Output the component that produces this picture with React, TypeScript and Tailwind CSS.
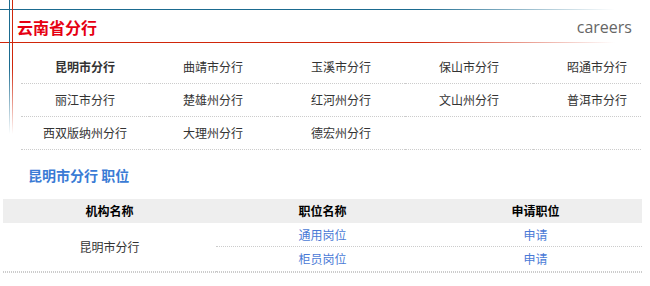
const branches = [
  "昆明市分行",
  "曲靖市分行",
  "玉溪市分行",
  "保山市分行",
  "昭通市分行",
  "丽江市分行",
  "楚雄州分行",
  "红河州分行",
  "文山州分行",
  "普洱市分行",
  "西双版纳州分行",
  "大理州分行",
  "德宏州分行",
  "",
  "",
];

const jobs = ["通用岗位", "柜员岗位"];

export default function App() {
  return (
    <div className="relative h-[286px] w-[650px] overflow-hidden bg-white font-['Noto_Sans_CJK_SC',sans-serif] text-[12px] text-[#333]">
      {/* decorative frame lines */}
      <div aria-hidden="true" className="pointer-events-none absolute left-0 top-[9px] h-px w-[615px] bg-linear-to-r from-[#1b6b90] via-[#1b6b90] via-68% to-white/0" />
      <div aria-hidden="true" className="pointer-events-none absolute left-0 top-[42px] h-px w-[615px] bg-linear-to-r from-[#d0260a] via-[#d0260a] via-68% to-white/0" />
      <div aria-hidden="true" className="pointer-events-none absolute left-[9px] top-0 h-[134px] w-px bg-linear-to-b from-[#1b6b90] via-[#1b6b90] via-50% to-white/0" />
      <div aria-hidden="true" className="pointer-events-none absolute left-[12px] top-0 h-[134px] w-px bg-linear-to-b from-[#d0260a] via-[#d0260a] via-50% to-white/0" />

      <div className="flex h-[43px] items-center justify-between pl-[17px] pr-[18px] pt-[10px]">
        <h2 className="text-[16px] font-bold leading-none text-[#e60012]">云南省分行</h2>
        <span className="font-['Open_Sans',sans-serif] text-[16px] leading-none text-[#666]">
          careers
        </span>
      </div>

      <div className="ml-[21px] mt-[8px] w-[621px] overflow-hidden">
        <ul className="grid w-[640px] grid-cols-[repeat(5,128px)]">
          {branches.map((name, i) => (
            <li
              key={i}
              className={`flex h-[33px] items-center justify-center border-b border-dotted border-[#ccc] ${
                i === 0 ? "font-bold" : ""
              }`}
            >
              {name}
            </li>
          ))}
        </ul>
      </div>

      <h3 className="ml-[28px] mt-[15px] h-[20px] text-[14px] font-bold leading-[20px] text-[#3a7bd5]">
        昆明市分行 职位
      </h3>

      <div className="ml-[3px] mt-[14px] w-[639px]">
        <div className="grid h-[24px] grid-cols-3 items-center bg-[#eee] text-center font-bold text-black">
          <span>机构名称</span>
          <span>职位名称</span>
          <span>申请职位</span>
        </div>
        <div className="flex">
          <div className="flex w-[213px] items-center justify-center border-b border-dotted border-[#ccc]">
            昆明市分行
          </div>
          <div className="flex-1">
            {jobs.map((job, i) => (
              <div
                key={job}
                className={`grid grid-cols-2 items-center border-b border-dotted border-[#ccc] text-center text-[#4a7ad6] ${
                  i === 0 ? "h-[24px]" : "h-[25px]"
                }`}
              >
                <a className="cursor-pointer">{job}</a>
                <a className="cursor-pointer">申请</a>
              </div>
            ))}
          </div>
        </div>
        <div className="border-t border-dotted border-[#ccc]" />
      </div>
    </div>
  );
}
